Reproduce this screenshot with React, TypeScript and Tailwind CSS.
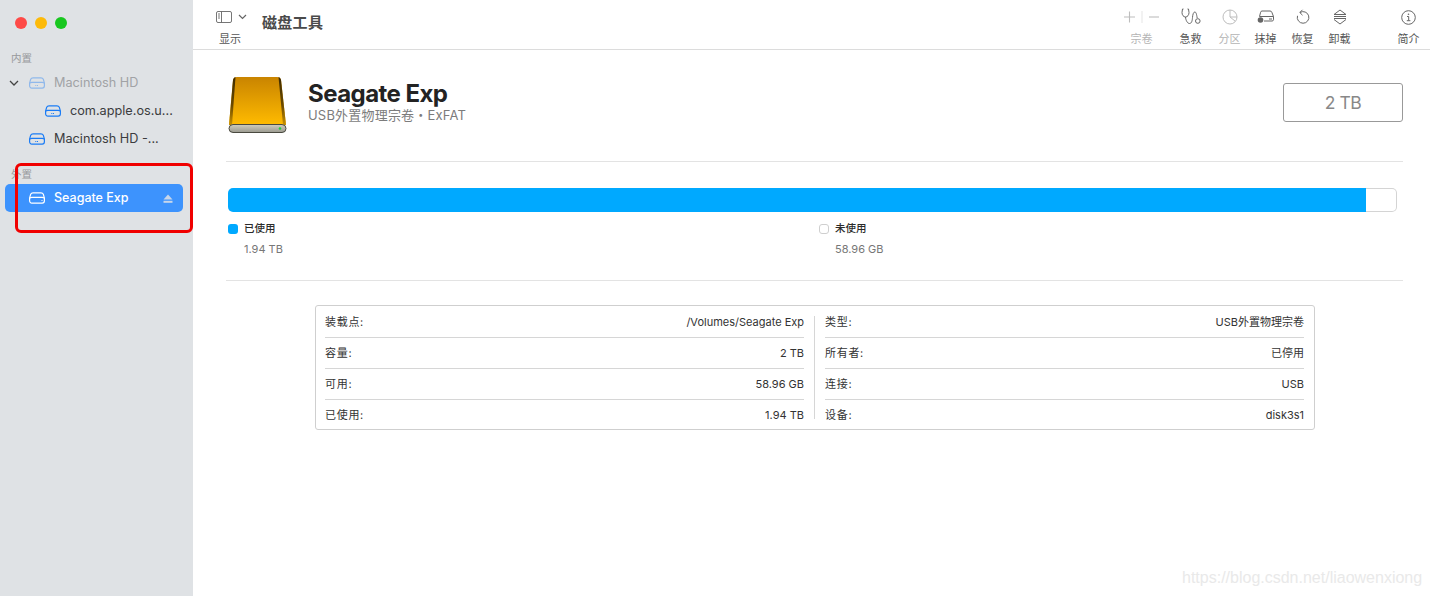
import React from 'react';

const font = { fontFamily: 'Inter, "Noto Sans CJK SC", sans-serif' };

function DriveIcon({ color = '#1b7cf5', dots = true }: { color?: string; dots?: boolean }) {
  return (
    <svg width="16" height="12" viewBox="0 0 16 12" fill="none" stroke={color} strokeWidth="1.2">
      <path d="M4 .8h8c1.200 0 1.900.5 2.300 1.400l1.100 4v2.600c0 1.200-.9 2.400-2.200 2.400H2.800C1.500 11.200.6 10 .6 8.800V6.200l1.100-4C2.100 1.300 2.800.8 4 .8z" />
      <path d="M.8 6.200c.6-.6 1.200-.8 2-.8h10.400c.8 0 1.400.2 2 .8" />
      {dots && <path d="M6.300 8.500h3.400" strokeDasharray="1 .7" />}
      {!dots && <path d="M12.500 8.500h1" />}
    </svg>
  );
}

function SideRow({ label, indent, dim, chevron }: { label: string; indent: string; dim?: boolean; chevron?: boolean }) {
  return (
    <div className={`h-7 flex items-center ${indent} relative`}>
      {chevron && (
        <svg className="absolute left-[9px] top-[11px]" width="10" height="7" viewBox="0 0 10 7" fill="none" stroke="#444" strokeWidth="1.3">
          <path d="M1 1l4 4 4-4" />
        </svg>
      )}
      <div className={dim ? 'opacity-40 flex' : 'flex'}>
        <DriveIcon />
      </div>
      <span className={`ml-[9px] text-[12.7px] whitespace-nowrap ${dim ? 'text-[#a1a3a6]' : 'text-[#3b3c3e]'}`}>{label}</span>
    </div>
  );
}

function Sidebar() {
  return (
    <aside className="w-[193px] shrink-0 bg-[#dfe2e5] relative">
      <div className="flex gap-2 pl-[15px] pt-[17px]">
        <div className="w-3 h-3 rounded-full bg-[#fe4a47]" />
        <div className="w-3 h-3 rounded-full bg-[#fdba09]" />
        <div className="w-3 h-3 rounded-full bg-[#18c71f]" />
      </div>
      <div className="mt-[22px] ml-[11px] h-[15px] text-[10.5px] leading-[15px] text-[#97999c]">内置</div>
      <div className="mt-[3px]">
        <SideRow label="Macintosh HD" indent="pl-[29px]" dim chevron />
        <SideRow label="com.apple.os.u..." indent="pl-[45px]" />
        <SideRow label="Macintosh HD -..." indent="pl-[29px]" />
      </div>
      <div className="mt-[14px] ml-[11px] h-[15px] text-[10.5px] leading-[15px] text-[#97999c]">外置</div>
      <div className="mt-[2px] mx-[5px] w-[178px] h-7 rounded-[5px] bg-[#3d93fd] flex items-center pl-6 pr-[10px]">
        <DriveIcon color="#fff" dots={false} />
        <span className="ml-[9px] text-[12.5px] font-medium text-white flex-1">Seagate Exp</span>
        <svg width="10" height="9" viewBox="0 0 10 9" fill="#c8d6ea">
          <path d="M5 .5L9.500 5.500H.5z" />
          <rect x=".5" y="6.800" width="9" height="2" />
        </svg>
      </div>
      <div className="absolute left-[15px] top-[163px] w-[178px] h-[70px] border-[3px] border-[#f00000] rounded-[6px]" />
    </aside>
  );
}

function ToolItem({ label, width, muted, children }: { label: string; width: string; muted?: boolean; children: React.ReactNode }) {
  return (
    <div className={`${width} flex flex-col items-center`}>
      <div className="h-[22px] flex items-center justify-center">{children}</div>
      <div className={`mt-[4px] text-[11px] leading-[14px] whitespace-nowrap ${muted ? 'text-[#b4b4b4]' : 'text-[#555]'}`}>{label}</div>
    </div>
  );
}

function Toolbar() {
  const dark = '#666';
  const light = '#bdbdbd';
  return (
    <header className="h-[50px] shrink-0 border-b border-[#dcdcdc] flex pt-[6px]">
      <div className="w-[65px] ml-[4px] relative">
        <div className="flex items-center pl-[19px] h-[22px]">
          <svg width="16" height="12" viewBox="0 0 16 12" fill="none" stroke={dark} strokeWidth="0.9">
            <rect x=".5" y=".5" width="15" height="11" rx="1.500" />
            <path d="M5.500 .5v11M2 3h2M2 5h2M2 7h2" />
          </svg>
          <svg className="ml-[6px]" width="9" height="6" viewBox="0 0 9 6" fill="none" stroke={dark} strokeWidth="1.200">
            <path d="M1 1l3.500 3.500L8 1" />
          </svg>
        </div>
        <div className="mt-[4px] pl-[22px] text-[11px] leading-[14px] text-[#555]">显示</div>
      </div>
      <div className="text-[15px] leading-[22px] mt-[6px] font-bold text-[#4a4a4a] whitespace-nowrap tracking-[0.3px]">磁盘工具</div>
      <div className="ml-auto mr-px flex">
        <ToolItem label="宗卷" width="w-[53px]" muted>
          <svg width="38" height="14" viewBox="0 0 38 14" fill="none" stroke={light} strokeWidth="1.100">
            <path d="M6.500 1.500v11M1 7h11" />
            <path d="M19 1v12" stroke="#e8e8e8" />
            <path d="M26 7h10" />
          </svg>
        </ToolItem>
        <ToolItem label="急救" width="w-[45px]">
          <svg width="20" height="18" viewBox="0 0 20 18" fill="none" stroke={dark} strokeWidth="1">
            <path d="M2.500 1H1.500L1 4.500c0 2.500 1.500 4.500 3.500 4.500S8 7 8 4.500L7.500 1h-1" />
            <path d="M4.500 9c.2 3 1.800 6.500 4 6.500s2.800-3 3-6 1-5.500 2.300-5.500 1.700 2 2.400 6" />
            <circle cx="16.800" cy="13" r="2.300" />
          </svg>
        </ToolItem>
        <ToolItem label="分区" width="w-[33px]" muted>
          <svg width="16" height="16" viewBox="0 0 16 16" fill="none" stroke={light} strokeWidth="1">
            <circle cx="8" cy="8" r="7" />
            <path d="M8 1v7l5 4" />
            <path d="M8 8h7" />
          </svg>
        </ToolItem>
        <ToolItem label="抹掉" width="w-[39px]">
          <svg width="18" height="14" viewBox="0 0 18 14" fill="none" stroke={dark} strokeWidth="1">
            <path d="M5 1h8c1 0 1.500.4 1.800 1.200l1.700 4.300v3.300c0 .8-.7 1.200-1.400 1.200H7" />
            <path d="M2.500 6.500L3.600 2.300C3.900 1.400 4.200 1 5 1M2.500 6.500h14" />
            <circle cx="3.500" cy="10" r="2.800" fill={dark} stroke="none" />
            <path d="M12 9h3" />
          </svg>
        </ToolItem>
        <ToolItem label="恢复" width="w-[35px]">
          <svg width="14" height="16" viewBox="0 0 14 16" fill="none" stroke={dark} strokeWidth="1">
            <path d="M4 3.500a5.800 5.800 0 1 1-2.500 3.300" />
            <path d="M6.500 .8L3.800 3.500l2.700 2.700" />
          </svg>
        </ToolItem>
        <ToolItem label="卸载" width="w-[39px]">
          <svg width="14" height="16" viewBox="0 0 14 16" fill="none" stroke={dark} strokeWidth="1">
            <path d="M1 5.500L7 1l6 4.500zM1 7.500h12M1 9.500h12M1 10.500L7 15l6-4.500" />
          </svg>
        </ToolItem>
        <div className="w-[29px]" />
        <ToolItem label="简介" width="w-[41px]">
          <svg width="15" height="15" viewBox="0 0 15 15" fill="none" stroke={dark} strokeWidth="1">
            <circle cx="7.500" cy="7.500" r="6.800" />
            <path d="M6 6.500h1.700v4M5.800 10.700h3.600" />
            <circle cx="7.500" cy="4.200" r=".8" fill={dark} stroke="none" />
          </svg>
        </ToolItem>
      </div>
    </header>
  );
}

function BigDrive() {
  return (
    <svg width="60" height="60" viewBox="0 0 60 60">
      <defs>
        <linearGradient id="body" x1="0" y1="0" x2="0" y2="1">
          <stop offset="0" stopColor="#c98400" />
          <stop offset="1" stopColor="#ffbb00" />
        </linearGradient>
        <linearGradient id="side" x1="0" y1="0" x2="0" y2="1">
          <stop offset="0" stopColor="#3f2c00" />
          <stop offset="0.6" stopColor="#6b4a00" />
          <stop offset="1" stopColor="#c99000" />
        </linearGradient>
        <linearGradient id="base" x1="0" y1="0" x2="0" y2="1">
          <stop offset="0" stopColor="#d0cdbd" />
          <stop offset="1" stopColor="#9a9a90" />
        </linearGradient>
      </defs>
      <path d="M9 2h40c2.500 0 3.500 1 4 3L58 50H1L5 5c.4-2 1.500-3 4-3z" fill="url(#body)" />
      <path d="M5 5c.3-1.500 1-2.500 2.500-3L4 50H1z" fill="url(#side)" />
      <path d="M53 5c-.3-1.500-1-2.500-2.500-3L55 50h3z" fill="url(#side)" />
      <rect x="1" y="49.500" width="57" height="8" rx="4" fill="url(#base)" stroke="#4a4a40" strokeWidth="1" />
      <circle cx="52" cy="53.500" r="1.300" fill="#1fd13c" />
    </svg>
  );
}

function Legend({ dot, label, value }: { dot: string; label: string; value: string }) {
  return (
    <div className="flex-1">
      <div className="flex items-center gap-[6px] h-[14px]">
        <div className={`w-[10px] h-[10px] rounded-[3px] ${dot}`} />
        <span className="text-[10.5px] font-medium text-[#2b2b2b]">{label}</span>
      </div>
      <div className="mt-[6px] pl-4 text-[11px] leading-[14px] text-[#777]">{value}</div>
    </div>
  );
}

function InfoColumn({ rows }: { rows: string[][] }) {
  return (
    <div className="flex-1 pt-px">
      {rows.map(([k, v], i) => (
        <div key={k} className={`flex items-center justify-between text-[11px] text-[#333] ${i < 3 ? 'h-[31px] border-b border-[#d6d6d6]' : 'h-[30px]'}`}>
          <span className="tracking-[0.7px]">{k}</span>
          <span>{v}</span>
        </div>
      ))}
    </div>
  );
}

export default function App() {
  return (
    <div className="w-[1430px] h-[596px] flex overflow-hidden bg-white relative" style={font}>
      <Sidebar />
      <main className="flex-1 flex flex-col min-w-0">
        <Toolbar />
        <div className="pl-[33px] pr-[27px]">
          <div className="h-[112px] border-b border-[#e3e3e3] flex items-start">
            <div className="mt-[25px] ml-[2px]"><BigDrive /></div>
            <div className="ml-[20px] mt-[30px]">
              <div className="text-[24px] leading-[28px] font-bold text-[#232323] tracking-[-0.55px]">Seagate Exp</div>
              <div className="-mt-px text-[13px] leading-[16px] text-[#7c7c7c] tracking-[0.2px]">USB外置物理宗卷・ExFAT</div>
            </div>
            <div className="ml-auto mt-[33px] w-[120px] h-[39px] border border-[#999] rounded-[3px] flex items-center justify-center pt-px text-[17.5px] text-[#888] tracking-[-0.5px]">2 TB</div>
          </div>
          <div className="h-[119px] border-b border-[#e3e3e3] pt-[26px] pl-[2px] pr-[6px]">
            <div className="h-6 flex">
              <div className="w-[1138px] rounded-l-[5px] bg-[#00a9ff]" />
              <div className="flex-1 border-y border-r border-[#d4d4d4] rounded-r-[5px]" />
            </div>
            <div className="mt-[10px] flex">
              <Legend dot="bg-[#00a9ff]" label="已使用" value="1.94 TB" />
              <div className="w-[578px]">
                <Legend dot="border border-[#cfcfcf]" label="未使用" value="58.96 GB" />
              </div>
            </div>
          </div>
          <div className="mt-6 ml-[89px] w-[1000px] h-[125px] border border-[#cfcfcf] rounded-[3px] flex pl-[9px] pr-[10px]">
            <InfoColumn rows={[['装载点:', '/Volumes/Seagate Exp'], ['容量:', '2 TB'], ['可用:', '58.96 GB'], ['已使用:', '1.94 TB']]} />
            <div className="w-px bg-[#d6d6d6] my-[10px] mx-[10px]" />
            <InfoColumn rows={[['类型:', 'USB外置物理宗卷'], ['所有者:', '已停用'], ['连接:', 'USB'], ['设备:', 'disk3s1']]} />
          </div>
        </div>
      </main>
      <div className="absolute left-[1182px] top-[568px] text-[16px] leading-[20px] text-[#e9e9e9] whitespace-nowrap font-['Liberation_Sans']">https://blog.csdn.net/liaowenxiong</div>
    </div>
  );
}
